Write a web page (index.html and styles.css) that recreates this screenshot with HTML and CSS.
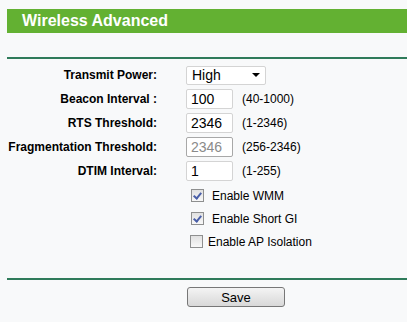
FILE: index.html
```html
<!DOCTYPE html>
<html lang="en">
<head>
    <meta charset="UTF-8">
    <title>Wireless Advanced</title>
    <link rel="stylesheet" href="styles.css">
</head>
<body>
    <div class="page">
        <div class="title">Wireless Advanced</div>

        <div class="form">
            <div class="row">
                <label class="label">Transmit Power:</label>
                <div class="select"><span>High</span><span class="caret"></span></div>
            </div>
            <div class="row">
                <label class="label">Beacon Interval :</label>
                <div class="field">100</div>
                <span class="range">(40-1000)</span>
            </div>
            <div class="row">
                <label class="label">RTS Threshold:</label>
                <div class="field">2346</div>
                <span class="range">(1-2346)</span>
            </div>
            <div class="row">
                <label class="label">Fragmentation Threshold:</label>
                <div class="field disabled">2346</div>
                <span class="range">(256-2346)</span>
            </div>
            <div class="row">
                <label class="label">DTIM Interval:</label>
                <div class="field">1</div>
                <span class="range">(1-255)</span>
            </div>
            <div class="row check-row first">
                <span class="box checked"></span>
                <span class="check-text">Enable WMM</span>
            </div>
            <div class="row check-row">
                <span class="box checked"></span>
                <span class="check-text">Enable Short GI</span>
            </div>
            <div class="row check-row shifted">
                <span class="box"></span>
                <span class="check-text">Enable AP Isolation</span>
            </div>
        </div>

        <div class="actions">
            <button class="save">Save</button>
        </div>
    </div>
</body>
</html>
```

FILE: styles.css
```css
body {
    margin: 0;
    background-color: #f8f9fa;
    font-family: Arial, "Liberation Sans", sans-serif;
    color: #000;
}
.page {
    padding: 9px 0 0 7px;
}
.title {
    height: 24px;
    line-height: 24px;
    background-color: #63b132;
    color: #fff;
    font-weight: bold;
    font-size: 16px;
    padding-left: 15px;
}
.form {
    margin-top: 24px;
    border-top: 2px solid #2f7b5a;
    padding-top: 4px;
    height: 215px;
}
.row {
    display: flex;
    align-items: center;
    height: 24px;
}
.label {
    width: 150px;
    text-align: right;
    font-weight: bold;
    font-size: 12px;
    margin-right: 29px;
}
.select {
    width: 68px;
    height: 17px;
    border: 1px solid #d4d4d4;
    border-radius: 2px;
    background: #fff;
    font-size: 14px;
    display: flex;
    align-items: center;
    justify-content: space-between;
    padding: 0 5px;
}
.caret {
    width: 0;
    height: 0;
    border-left: 4px solid transparent;
    border-right: 4px solid transparent;
    border-top: 4px solid #000;
}
.field {
    width: 41px;
    height: 18px;
    line-height: 18px;
    border: 1px solid #d4d4d4;
    border-radius: 2px;
    background: #fff;
    font-size: 14px;
    padding-left: 4px;
}
.field.disabled {
    color: #8a8a8a;
    border-color: #a8a8a8;
}
.range {
    font-size: 12px;
    margin-left: 9px;
}
.check-row {
    padding-left: 184px;
    height: 23px;
}
.check-row.first {
    margin-top: 1px;
}
.box {
    width: 11px;
    height: 11px;
    border: 1px solid #8e8f8f;
    background: linear-gradient(#e1e1e1, #f8f8f8);
    position: relative;
}
.box.checked::after {
    content: "";
    position: absolute;
    left: 3px;
    top: 1px;
    width: 3px;
    height: 6px;
    border-right: 2px solid #4a5fa8;
    border-bottom: 2px solid #4a5fa8;
    transform: rotate(40deg);
}
.check-text {
    font-size: 12px;
    margin-left: 8px;
}
.shifted {
    padding-left: 183px;
}
.shifted .check-text {
    margin-left: 5px;
}
.actions {
    border-top: 2px solid #2f7b5a;
    padding: 7px 0 0 180px;
}
.save {
    width: 98px;
    height: 20px;
    border: 1px solid #777;
    border-radius: 3px;
    background: linear-gradient(#f4f4f4, #d8d8d8);
    font-family: Arial, "Liberation Sans", sans-serif;
    font-size: 13px;
    padding: 0;
}
```
